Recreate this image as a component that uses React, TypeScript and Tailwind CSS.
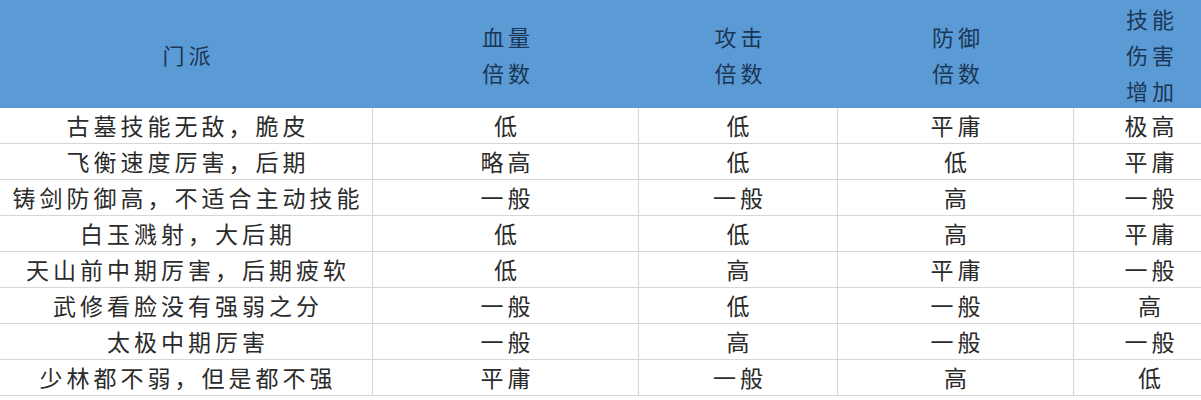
const header: string[][] = [
  ['门派'],
  ['血量', '倍数'],
  ['攻击', '倍数'],
  ['防御', '倍数'],
  ['技能', '伤害', '增加'],
];

const rows: string[][] = [
  ['古墓技能无敌，脆皮', '低', '低', '平庸', '极高'],
  ['飞衡速度厉害，后期', '略高', '低', '低', '平庸'],
  ['铸剑防御高，不适合主动技能', '一般', '一般', '高', '一般'],
  ['白玉溅射，大后期', '低', '低', '高', '平庸'],
  ['天山前中期厉害，后期疲软', '低', '高', '平庸', '一般'],
  ['武修看脸没有强弱之分', '一般', '低', '一般', '高'],
  ['太极中期厉害', '一般', '高', '一般', '一般'],
  ['少林都不弱，但是都不强', '平庸', '一般', '高', '低'],
];

const cols = 'grid grid-cols-[373px_266px_199px_236px_152px]';

export default function App() {
  return (
    <div
      className="w-[1201px] h-[400px] overflow-hidden bg-white"
      style={{ fontFamily: '"Noto Sans CJK SC", "Noto Sans", sans-serif' }}
    >
      <div className="w-[1226px]">
        <div className={`${cols} h-[108px] bg-[#5b9bd5] text-[#1c3656]`}>
          {header.map((lines, i) => (
            <div key={i} className="flex flex-col items-center justify-center">
              {lines.map((l) => (
                <span key={l} className="text-[22px] leading-[36px] tracking-[4px] pl-[4px]">
                  {l}
                </span>
              ))}
            </div>
          ))}
        </div>
        {rows.map((r, ri) => (
          <div key={ri} className={`${cols} h-[36px] border-b border-[#d6d6d6] text-[#2b2b2b]`}>
            {r.map((c, ci) => (
              <div
                key={ci}
                className="flex items-center justify-center border-r border-[#d6d6d6] text-[23px] leading-none tracking-[4px] pl-[4px]"
              >
                {c}
              </div>
            ))}
          </div>
        ))}
      </div>
    </div>
  );
}
